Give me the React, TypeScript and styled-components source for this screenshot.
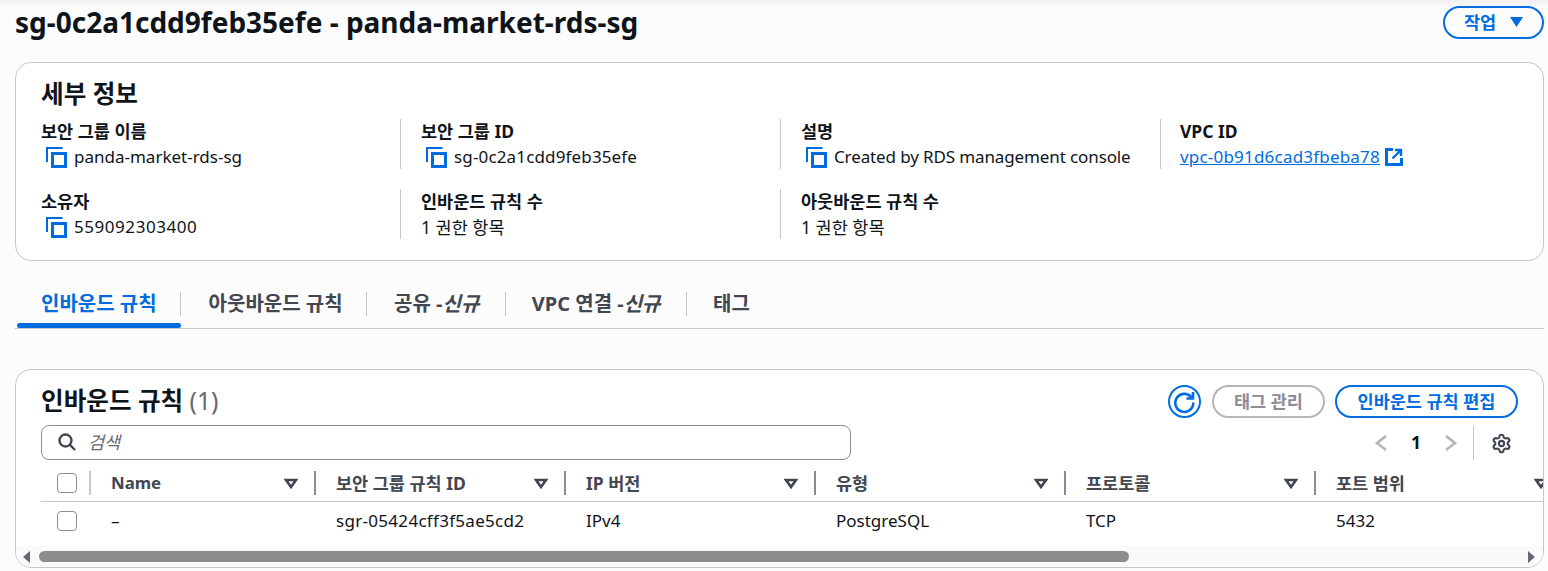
import React from "react"
import styled, { createGlobalStyle } from "styled-components"
import { Settings } from "lucide-react"

const GlobalStyle = createGlobalStyle`
  html, body {
    margin: 0;
    background: #fcfcfd;
    overflow: hidden;
  }
  body {
    font-family: "Noto Sans", "Noto Sans CJK KR", sans-serif;
    color: #0f141a;
  }
`

const BLUE = "#006ce0"

const Page = styled.div`
  width: 1548px;
  height: 571px;
  box-sizing: border-box;
  padding: 0 4px 0 15px;
  background: linear-gradient(#f0f0f2 0, #fcfcfd 9px);
  overflow: hidden;
`

const PageHeader = styled.header`
  height: 62px;
  display: flex;
  align-items: flex-start;
  justify-content: space-between;
`

const PageTitle = styled.h1`
  margin: 3px 0 0;
  font-size: 28px;
  line-height: 38px;
  font-weight: 700;
`

const PillButton = styled.button<{ $disabled?: boolean; $width?: number }>`
  height: 33px;
  width: ${(p) => (p.$width ? `${p.$width}px` : "auto")};
  box-sizing: border-box;
  padding: 0 0 2px;
  display: inline-flex;
  align-items: center;
  justify-content: center;
  gap: 14px;
  border-radius: 17px;
  border: 2px solid ${(p) => (p.$disabled ? "#b4b4bb" : BLUE)};
  background: #fff;
  color: ${(p) => (p.$disabled ? "#8c8c94" : BLUE)};
  font: 700 17.5px "Noto Sans", "Noto Sans CJK KR", sans-serif;
`

const ActionsButton = styled(PillButton)`
  margin: 6px 0 0;
  background: transparent;
`

const Card = styled.section`
  box-sizing: border-box;
  background: #fff;
  border: 1px solid #c6c6cd;
  border-radius: 16px;
  overflow: hidden;
`

const DetailCard = styled(Card)`
  height: 199px;
  padding: 15px 0 0 25px;
`

const CardHeading = styled.h2`
  margin: 0;
  font-size: 24.6px;
  line-height: 32px;
  font-weight: 700;
`

const DetailGrid = styled.div`
  margin-top: 9px;
  display: grid;
  grid-template-columns: repeat(4, 380px);
  grid-auto-rows: 50px;
  row-gap: 20px;
`

const DetailItem = styled.div`
  &:not(:nth-child(4n + 1)) {
    border-left: 1px solid #c6c6cd;
    padding-left: 20px;
    margin-left: -21px;
  }
  &:nth-child(4) {
    padding-left: 19px;
  }
`

const DetailLabel = styled.div`
  font-size: 17.5px;
  line-height: 24px;
  font-weight: 700;
`

const DetailValue = styled.div<{ $korean?: boolean; $tracking?: number }>`
  margin-top: 2px;
  display: flex;
  align-items: center;
  font-size: ${(p) => (p.$korean ? "17.5px" : "17px")};
  line-height: 24px;
  letter-spacing: ${(p) => p.$tracking ?? 0}px;
`

const CopyButton = styled.span`
  width: 21px;
  height: 21px;
  margin: 0 7px 0 5px;
  color: ${BLUE};
  display: block;
  svg { display: block; }
`

const VpcLink = styled.a`
  color: ${BLUE};
  display: inline-flex;
  align-items: center;
  gap: 5px;
  text-decoration: underline;
`

const Tabs = styled.nav`
  margin-top: 29px;
  height: 39px;
  display: flex;
  box-sizing: border-box;
  border-bottom: 1px solid #c6c6cd;
`

const Tab = styled.div<{ $active?: boolean }>`
  position: relative;
  height: 38px;
  box-sizing: border-box;
  padding: 1px 26.5px 0 26px;
  display: flex;
  align-items: flex-start;
  font-size: 20px;
  line-height: 26px;
  font-weight: 700;
  color: ${(p) => (p.$active ? BLUE : "#424650")};
  &:first-child {
    margin-left: 2px;
    padding-left: 24px;
    padding-right: 24px;
  }
  &:nth-child(2) {
    padding-left: 28px;
    padding-right: 24.5px;
  }
  &:nth-child(3) {
    padding-left: 27px;
  }
  &:not(:last-child)::after {
    content: "";
    position: absolute;
    right: 0;
    top: 2px;
    height: 24px;
    width: 1px;
    background: #c6c6cd;
  }
  ${(p) =>
    p.$active &&
    `&::before {
      content: "";
      position: absolute;
      left: 0;
      right: 0;
      bottom: 0;
      height: 5px;
      border-radius: 3px;
      background: ${BLUE};
    }`}
  em {
    font-style: italic;
  }
`

const RulesCard = styled(Card)`
  margin-top: 40px;
  height: 199px;
  display: flex;
  flex-direction: column;
`

const RulesHeader = styled.div`
  height: 55px;
  padding: 15px 25px 0 25px;
  box-sizing: border-box;
  display: flex;
  justify-content: space-between;
  align-items: flex-start;
`

const RulesHeading = styled(CardHeading)`
  span {
    font-weight: 400;
    color: #656871;
  }
`

const RulesActions = styled.div`
  display: flex;
  align-items: center;
  gap: 10px;
`

const RefreshButton = styled.span`
  width: 33px;
  height: 33px;
  margin-right: 1px;
  color: ${BLUE};
  display: block;
`

const FilterRow = styled.div`
  height: 36px;
  padding: 0 31px 0 25px;
  display: flex;
  justify-content: space-between;
`

const SearchBox = styled.div`
  width: 810px;
  height: 35px;
  box-sizing: border-box;
  border: 1px solid #8c8c94;
  border-radius: 8px;
  padding: 0 15px 2px 16px;
  display: flex;
  align-items: center;
  gap: 12px;
  color: #424650;
  font-size: 17.5px;
  em {
    font-style: italic;
    color: #656871;
  }
`

const Pager = styled.div`
  display: flex;
  align-items: center;
  color: #b4b4bb;
`

const PageNumber = styled.span`
  width: 46px;
  padding-bottom: 3px;
  text-align: center;
  font-size: 17.5px;
  font-weight: 700;
  color: #0f141a;
`

const PagerChevron = styled.svg`
  width: 24px;
  height: 18px;
`

const PagerSettings = styled.div`
  margin-left: 10px;
  padding-left: 17px;
  height: 34px;
  border-left: 1px solid #c6c6cd;
  display: flex;
  align-items: center;
  color: #424650;
`

const TableWrap = styled.div`
  margin-left: 25px;
  overflow: hidden;
`

const Row = styled.div<{ $head?: boolean }>`
  display: grid;
  grid-template-columns: 49px 225px repeat(5, 250px);
  height: ${(p) => (p.$head ? "41px" : "39px")};
  box-sizing: border-box;
  padding: ${(p) => (p.$head ? "4px 0 0" : "0 0 2px")};
  align-items: center;
  border-bottom: ${(p) => (p.$head ? "1px solid #c6c6cd" : "none")};
`

const CheckCell = styled.div`
  padding-left: 16px;
  height: 100%;
  display: flex;
  align-items: center;
`

const Checkbox = styled.span`
  width: 20px;
  height: 20px;
  box-sizing: border-box;
  border: 1px solid #8c8c94;
  border-radius: 4px;
  background: #fff;
`

const HeadCell = styled.div<{ $first?: boolean }>`
  height: 24px;
  padding-left: 20px;
  margin-left: -1px;
  display: flex;
  align-items: center;
  justify-content: space-between;
  border-left: 2px solid ${(p) => (p.$first ? "#c6c6cd" : "#8c8c94")};
  box-sizing: border-box;
  font-size: 17.5px;
  line-height: 24px;
  font-weight: 700;
  color: #424650;
`

const HeadName = styled.span<{ $latin?: boolean }>`
  font-size: ${(p) => (p.$latin ? "16.8px" : "17.5px")};
`

const Caret = styled.svg`
  width: 14px;
  height: 11px;
  margin-right: 17px;
  color: #424650;
`

const BodyCell = styled.div`
  padding-left: 21px;
  font-size: 17px;
  line-height: 24px;
  &:nth-child(3) {
    letter-spacing: 0.3px;
  }
`

const ScrollBar = styled.div`
  margin-top: auto;
  height: 21px;
  background: #fafafb;
  display: flex;
  align-items: center;
  justify-content: space-between;
  padding: 0 8px 0 7px;
`

const ScrollTrack = styled.div`
  position: relative;
  display: flex;
  align-items: center;
`

const Thumb = styled.div`
  position: absolute;
  left: 16px;
  width: 1090px;
  height: 11px;
  border-radius: 6px;
  background: #8c8c8c;
`

const CopyIcon = () => (
  <svg width="21" height="21" viewBox="0 0 21 21" fill="none" stroke="currentColor">
    <path strokeWidth="2" d="M1 15V1h15.5" />
    <rect strokeWidth="3" x="6.5" y="6.5" width="13" height="13" />
  </svg>
)

const ExternalIcon = () => (
  <svg width="18" height="18" viewBox="0 0 18 18" fill="none" stroke="currentColor">
    <path strokeWidth="3" d="M8 1.5H1.5v15h15V10" />
    <path strokeWidth="2.4" d="M7.5 10.5 15 3M10 2h6v6" />
  </svg>
)

const HeadCaret = () => (
  <Caret viewBox="0 0 14 11" fill="none" stroke="currentColor" strokeWidth="2.6">
    <path d="M2 2h10L7 9z" />
  </Caret>
)

const details = [
  { label: "보안 그룹 이름", value: "panda-market-rds-sg", copy: true },
  { label: "보안 그룹 ID", value: "sg-0c2a1cdd9feb35efe", copy: true, tracking: 0.15 },
  { label: "설명", value: "Created by RDS management console", copy: true, tracking: -0.12 },
  { label: "VPC ID", value: "vpc-0b91d6cad3fbeba78", link: true, tracking: 0.2 },
  { label: "소유자", value: "559092303400", copy: true, tracking: 0.55 },
  { label: "인바운드 규칙 수", value: "1 권한 항목", korean: true },
  { label: "아웃바운드 규칙 수", value: "1 권한 항목", korean: true },
]

const columns = ["Name", "보안 그룹 규칙 ID", "IP 버전", "유형", "프로토콜", "포트 범위"]
const cells = ["–", "sgr-05424cff3f5ae5cd2", "IPv4", "PostgreSQL", "TCP", "5432"]

export default function App() {
  return (
    <Page>
      <GlobalStyle />
      <PageHeader>
        <PageTitle>sg-0c2a1cdd9feb35efe - panda-market-rds-sg</PageTitle>
        <ActionsButton $width={101}>
          작업
          <svg width="13" height="10" viewBox="0 0 13 10" fill="currentColor">
            <path d="M0 0h13L6.5 10z" />
          </svg>
        </ActionsButton>
      </PageHeader>

      <DetailCard>
        <CardHeading>세부 정보</CardHeading>
        <DetailGrid>
          {details.map((d) => (
            <DetailItem key={d.label}>
              <DetailLabel>{d.label}</DetailLabel>
              <DetailValue $korean={d.korean} $tracking={d.tracking}>
                {d.copy && (
                  <CopyButton>
                    <CopyIcon />
                  </CopyButton>
                )}
                {d.link ? (
                  <VpcLink>
                    {d.value}
                    <ExternalIcon />
                  </VpcLink>
                ) : (
                  d.value
                )}
              </DetailValue>
            </DetailItem>
          ))}
        </DetailGrid>
      </DetailCard>

      <Tabs>
        <Tab $active>인바운드 규칙</Tab>
        <Tab>아웃바운드 규칙</Tab>
        <Tab>공유 -<em>신규</em></Tab>
        <Tab>VPC 연결 -<em>신규</em></Tab>
        <Tab>태그</Tab>
      </Tabs>

      <RulesCard>
        <RulesHeader>
          <RulesHeading>인바운드 규칙 <span>(1)</span></RulesHeading>
          <RulesActions>
            <RefreshButton>
              <svg width="33" height="33" viewBox="0 0 33 33" fill="none" stroke="currentColor" strokeWidth="2">
                <circle cx="16.5" cy="16.5" r="15.5" />
                <path strokeWidth="2.6" d="M23.5 12.5a9 9 0 1 0 1.8 5" />
                <path strokeWidth="2.6" d="M25 7v6.5h-6.5" />
              </svg>
            </RefreshButton>
            <PillButton $disabled $width={113}>태그 관리</PillButton>
            <PillButton $width={183}>인바운드 규칙 편집</PillButton>
          </RulesActions>
        </RulesHeader>

        <FilterRow>
          <SearchBox>
            <svg width="18" height="18" viewBox="0 0 18 18" fill="none" stroke="currentColor" strokeWidth="2.4">
              <circle cx="7.5" cy="7.5" r="6" />
              <path d="m12 12 5 5" />
            </svg>
            <em>검색</em>
          </SearchBox>
          <Pager>
            <PagerChevron viewBox="0 0 24 18" fill="none" stroke="currentColor" strokeWidth="2.6">
              <path d="M17 2 8 9l9 7" />
            </PagerChevron>
            <PageNumber>1</PageNumber>
            <PagerChevron viewBox="0 0 24 18" fill="none" stroke="currentColor" strokeWidth="2.6">
              <path d="m7 2 9 7-9 7" />
            </PagerChevron>
            <PagerSettings><Settings size={21} strokeWidth={2.4} /></PagerSettings>
          </Pager>
        </FilterRow>

        <TableWrap>
          <Row $head>
            <CheckCell><Checkbox /></CheckCell>
            {columns.map((c, i) => (
              <HeadCell key={c} $first={i === 0}>
                <HeadName $latin={i === 0}>{c}</HeadName>
                <HeadCaret />
              </HeadCell>
            ))}
          </Row>
          <Row>
            <CheckCell><Checkbox /></CheckCell>
            {cells.map((c) => (
              <BodyCell key={c}>{c}</BodyCell>
            ))}
          </Row>
        </TableWrap>

        <ScrollBar>
          <ScrollTrack>
            <svg width="7" height="12" viewBox="0 0 7 12" fill="#656871"><path d="M7 0v12L0 6z" /></svg>
            <Thumb />
          </ScrollTrack>
          <svg width="7" height="12" viewBox="0 0 7 12" fill="#656871"><path d="M0 0v12l7-6z" /></svg>
        </ScrollBar>
      </RulesCard>
    </Page>
  )
}
